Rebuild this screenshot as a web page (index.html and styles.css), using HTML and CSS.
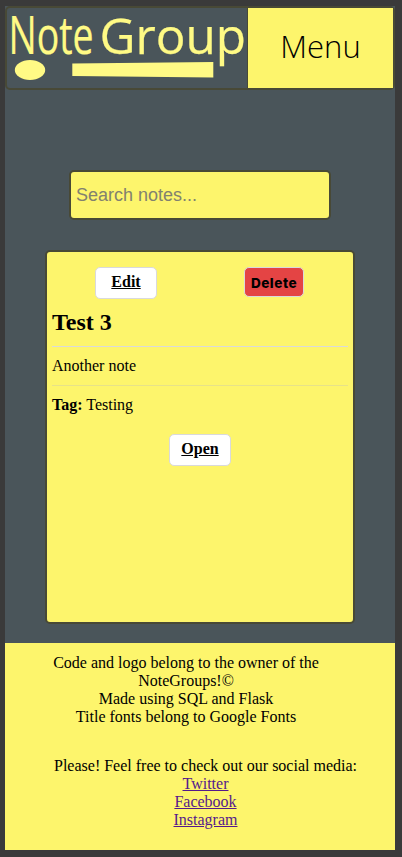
FILE: index.html
```html
<!DOCTYPE html>
<html lang="en">
<head>
<meta charset="utf-8">
<title>Note Group</title>
<link rel="stylesheet" href="styles.css">
</head>
<body>
<div class="page">
  <header class="header">
    <svg class="logo" width="240" height="80" viewBox="0 0 240 80" role="img" aria-label="Note Group">
      <text class="logo-text" transform="translate(1.5 45.6) scale(.675 1)" font-size="53.5" textLength="126" lengthAdjust="spacingAndGlyphs">Note</text>
      <text class="logo-text" x="92.5" y="46" font-size="50" textLength="146.5" lengthAdjust="spacingAndGlyphs">Group</text>
      <ellipse cx="23" cy="62" rx="15.2" ry="10"/>
      <path d="M65.3 55.5L206.3 54V69.5L65.3 68Z"/>
    </svg>
    <div class="menu">Menu</div>
  </header>
  <main class="main">
    <input class="search" type="text" placeholder="Search notes...">
    <article class="note">
      <div class="actions">
        <a class="button">Edit</a>
        <button class="delete">Delete</button>
      </div>
      <h2 class="title">Test 3</h2>
      <p class="text">Another note</p>
      <p class="tag"><b>Tag:</b> Testing</p>
      <a class="button open">Open</a>
    </article>
  </main>
  <footer class="footer">
    <p class="credits">Code and logo belong to the owner of the NoteGroups!©<br>Made using SQL and Flask<br>Title fonts belong to Google Fonts</p>
    <p class="social">Please! Feel free to check out our social media:<br><a href="#">Twitter</a><br><a href="#">Facebook</a><br><a href="#">Instagram</a></p>
  </footer>
</div>
</body>
</html>
```

FILE: styles.css
```css
* { box-sizing: border-box; }
body {
  margin: 0;
  padding: 6px 7px 7px 5px;
  height: 857px;
  background: #3a3a3a;
  font: 16px/18px "Liberation Serif", "Times New Roman", serif;
  color: #000;
}
p, h2 { margin: 0; }
.page {
  height: 844px;
  display: flex;
  flex-direction: column;
  background: #4a555a;
}
.header {
  height: 84px;
  display: flex;
  border: 2px solid #484936;
  border-radius: 5px;
}
.logo { flex: none; fill: #fffa85; overflow: visible; }
.logo-text {
  font-family: "Open Sans", sans-serif;
  stroke: #fffa85;
  stroke-width: .25px;
}
.menu {
  flex: 1;
  background: #fdf56c;
  border-left: 1px solid #484936;
  text-align: center;
  font: 300 31px/77px "Open Sans", sans-serif;
}
.main {
  flex: 1;
  display: flex;
  flex-direction: column;
  align-items: center;
}
.search {
  margin: 80px 0 30px;
  width: 262px;
  height: 50px;
  padding: 0 5px;
  border: 2px solid #484936;
  border-radius: 5px;
  background: #fdf56c;
  font: 18px "Liberation Sans", Arial, sans-serif;
}
.search::placeholder { color: #82816f; opacity: 1; }
.note {
  width: 310px;
  height: 374px;
  padding: 15px 5px;
  border: 2px solid #484936;
  border-radius: 5px;
  background: #fdf56c;
}
.actions { display: flex; justify-content: space-between; padding: 0 44px 0 43px; }
.button {
  display: block;
  width: 62px;
  height: 32px;
  border: 1px solid #d9d9dc;
  border-radius: 5px;
  background: #fff;
  text-align: center;
  text-decoration: underline;
  font-weight: bold;
  line-height: 28px;
}
.delete {
  width: 60px;
  height: 30px;
  padding: 1px 0 0;
  border: 1px solid #d9d9dc;
  border-radius: 5px;
  background: #e44444;
  color: #000;
  font: 800 13.6px "Inter", sans-serif;
  letter-spacing: .5px;
}
.title {
  height: 48px;
  border-bottom: 1px solid #dadada;
  font-size: 24px;
  line-height: 46px;
}
.text {
  height: 39px;
  border-bottom: 1px solid #e7e289;
  line-height: 38px;
}
.tag { height: 48px; line-height: 38px; }
.open { margin: 0 auto; }
.footer {
  height: 207px;
  padding: 11px 0 0 48px;
  background: #fdf56c;
  text-align: center;
}
.credits { width: 266px; margin-bottom: 31px; }
.social { width: 305px; white-space: nowrap; }
.social a { color: #551a8b; }
```
